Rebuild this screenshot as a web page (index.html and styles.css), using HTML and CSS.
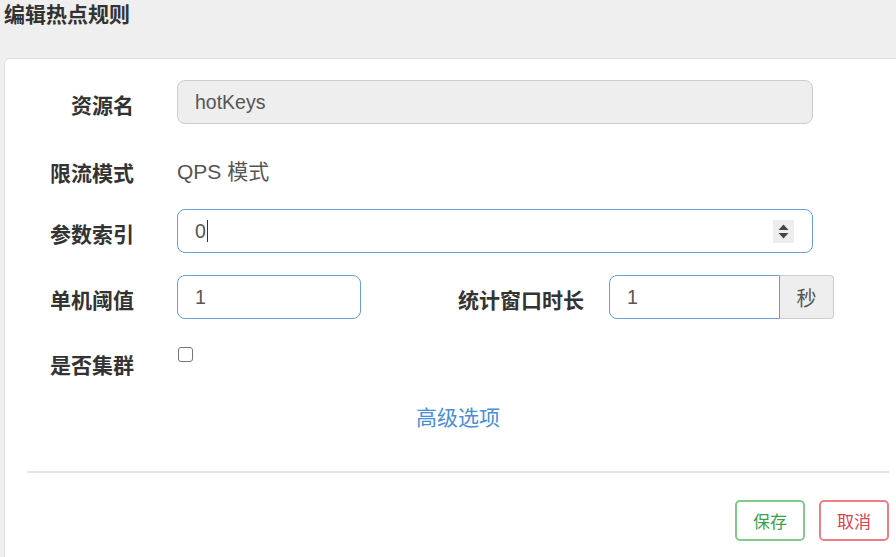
FILE: index.html
```html
<!DOCTYPE html>
<html lang="zh-CN">
<head>
<meta charset="utf-8">
<title>编辑热点规则</title>
<link rel="stylesheet" href="styles.css">
</head>
<body>
<h4 class="title">编辑热点规则</h4>
<div class="card">
  <form class="form">
    <div class="row">
      <label class="label">资源名</label>
      <input class="input input-full input-readonly" type="text" value="hotKeys" readonly>
    </div>
    <div class="row row-static">
      <label class="label">限流模式</label>
      <span class="static">QPS 模式</span>
    </div>
    <div class="row row-third">
      <label class="label">参数索引</label>
      <div class="input input-full field">
        <span class="field-value">0</span><span class="caret"></span>
        <span class="spinner">
          <svg width="21" height="23" viewBox="0 0 21 23"><path d="M5.5 10 L10.5 4.5 L15.5 10 Z" fill="#444"/><path d="M5.5 13 L10.5 18.5 L15.5 13 Z" fill="#444"/></svg>
        </span>
      </div>
    </div>
    <div class="row row-gap">
      <label class="label">单机阈值</label>
      <input class="input input-sm" type="text" value="1">
      <label class="label-inline">统计窗口时长</label>
      <div class="input-group">
        <input class="input input-group-field" type="text" value="1">
        <span class="addon">秒</span>
      </div>
    </div>
    <div class="row row-gap row-check">
      <label class="label label-check">是否集群</label>
      <span class="checkbox"></span>
    </div>
    <div class="advanced">高级选项</div>
  </form>
  <hr class="divider">
  <div class="footer">
    <button class="btn btn-save" type="button">保存</button>
    <button class="btn btn-cancel" type="button">取消</button>
  </div>
</div>
</body>
</html>
```

FILE: styles.css
```css
html, body {
  overflow: hidden;
}
body {
  margin: 0;
  background: #efefef;
  font-family: "Liberation Sans", "Noto Sans CJK SC", sans-serif;
  color: #333;
}
.title {
  margin: 0;
  padding: 2px 0 0 4px;
  font-family: "Noto Sans CJK SC", sans-serif;
  font-size: 21px;
  line-height: 23px;
  font-weight: bold;
  color: #333;
}
.card {
  margin: 33px 0 0 4px;
  width: 908px;
  height: 520px;
  box-sizing: border-box;
  background: #fff;
  border: 1px solid #dedede;
  border-radius: 6px;
  padding-top: 21px;
}
.form {
  margin: 0;
}
.row {
  display: flex;
  align-items: center;
}
.row-static {
  margin-top: 24px;
  min-height: 44px;
}
.row-third {
  margin-top: 17px;
}
.row-gap {
  margin-top: 22px;
}
.label {
  width: 129px;
  flex: none;
  margin-right: 43px;
  padding-top: 4px;
  text-align: right;
  font-family: "Noto Sans CJK SC", sans-serif;
  font-size: 21px;
  font-weight: bold;
  color: #333;
}
.label-inline {
  margin-left: 97px;
  margin-right: 25px;
  padding-top: 4px;
  font-family: "Noto Sans CJK SC", sans-serif;
  font-size: 21px;
  font-weight: bold;
  color: #333;
}
.input {
  box-sizing: border-box;
  height: 44px;
  border: 1px solid #6b9fd3;
  border-radius: 8px;
  padding: 0 17px;
  font-family: "Liberation Sans", "Noto Sans CJK SC", sans-serif;
  font-size: 19.5px;
  color: #555;
  background: #fff;
  outline: none;
  margin: 0;
}
.input-full {
  width: 636px;
}
.input-sm {
  width: 184px;
}
.input-readonly {
  background: #eee;
  border-color: #ccc;
}
.field {
  display: flex;
  align-items: center;
}
.field-value {
  line-height: 22px;
}
.caret {
  width: 1px;
  height: 22px;
  background: #333;
  margin-left: 1px;
}
.spinner {
  margin-left: auto;
  margin-right: 1px;
  width: 21px;
  height: 23px;
  background: #ededed;
  display: flex;
}
.static {
  font-family: "Liberation Sans", "Noto Sans CJK SC", sans-serif;
  font-size: 21px;
  color: #555;
}
.input-group {
  display: flex;
}
.input-group-field {
  width: 171px;
  border-radius: 8px 0 0 8px;
}
.addon {
  box-sizing: border-box;
  width: 54px;
  height: 44px;
  display: flex;
  align-items: center;
  justify-content: center;
  background: #eee;
  border: 1px solid #ccc;
  border-left: none;
  border-radius: 0 4px 4px 0;
  font-family: "Noto Sans CJK SC", sans-serif;
  font-size: 20px;
  color: #555;
}
.row-check {
  align-items: flex-start;
}
.label-check {
  line-height: 44px;
  padding-top: 1px;
}
.checkbox {
  margin-top: 6px;
  margin-left: 1px;
  width: 15px;
  height: 15px;
  box-sizing: border-box;
  border: 1.5px solid #767676;
  border-radius: 3px;
  background: #fff;
}
.advanced {
  margin-top: 15px;
  text-align: center;
  line-height: 30px;
  font-family: "Noto Sans CJK SC", sans-serif;
  font-size: 21px;
  color: #4a8fd6;
}
.divider {
  margin: 40px 22px 0;
  border: 0;
  border-top: 2px solid #e5e5e5;
  height: 0;
}
.footer {
  display: flex;
  justify-content: flex-end;
  gap: 14px;
  padding-right: 22px;
  margin-top: 27px;
}
.btn {
  width: 70px;
  height: 41px;
  box-sizing: border-box;
  background: #fff;
  border-radius: 5px;
  font-family: "Noto Sans CJK SC", sans-serif;
  font-size: 17px;
  padding: 0;
}
.btn-save {
  border: 2px solid #80cb8c;
  color: #3e9f4c;
}
.btn-cancel {
  border: 2px solid #ec7e86;
  color: #d9414d;
}
```
